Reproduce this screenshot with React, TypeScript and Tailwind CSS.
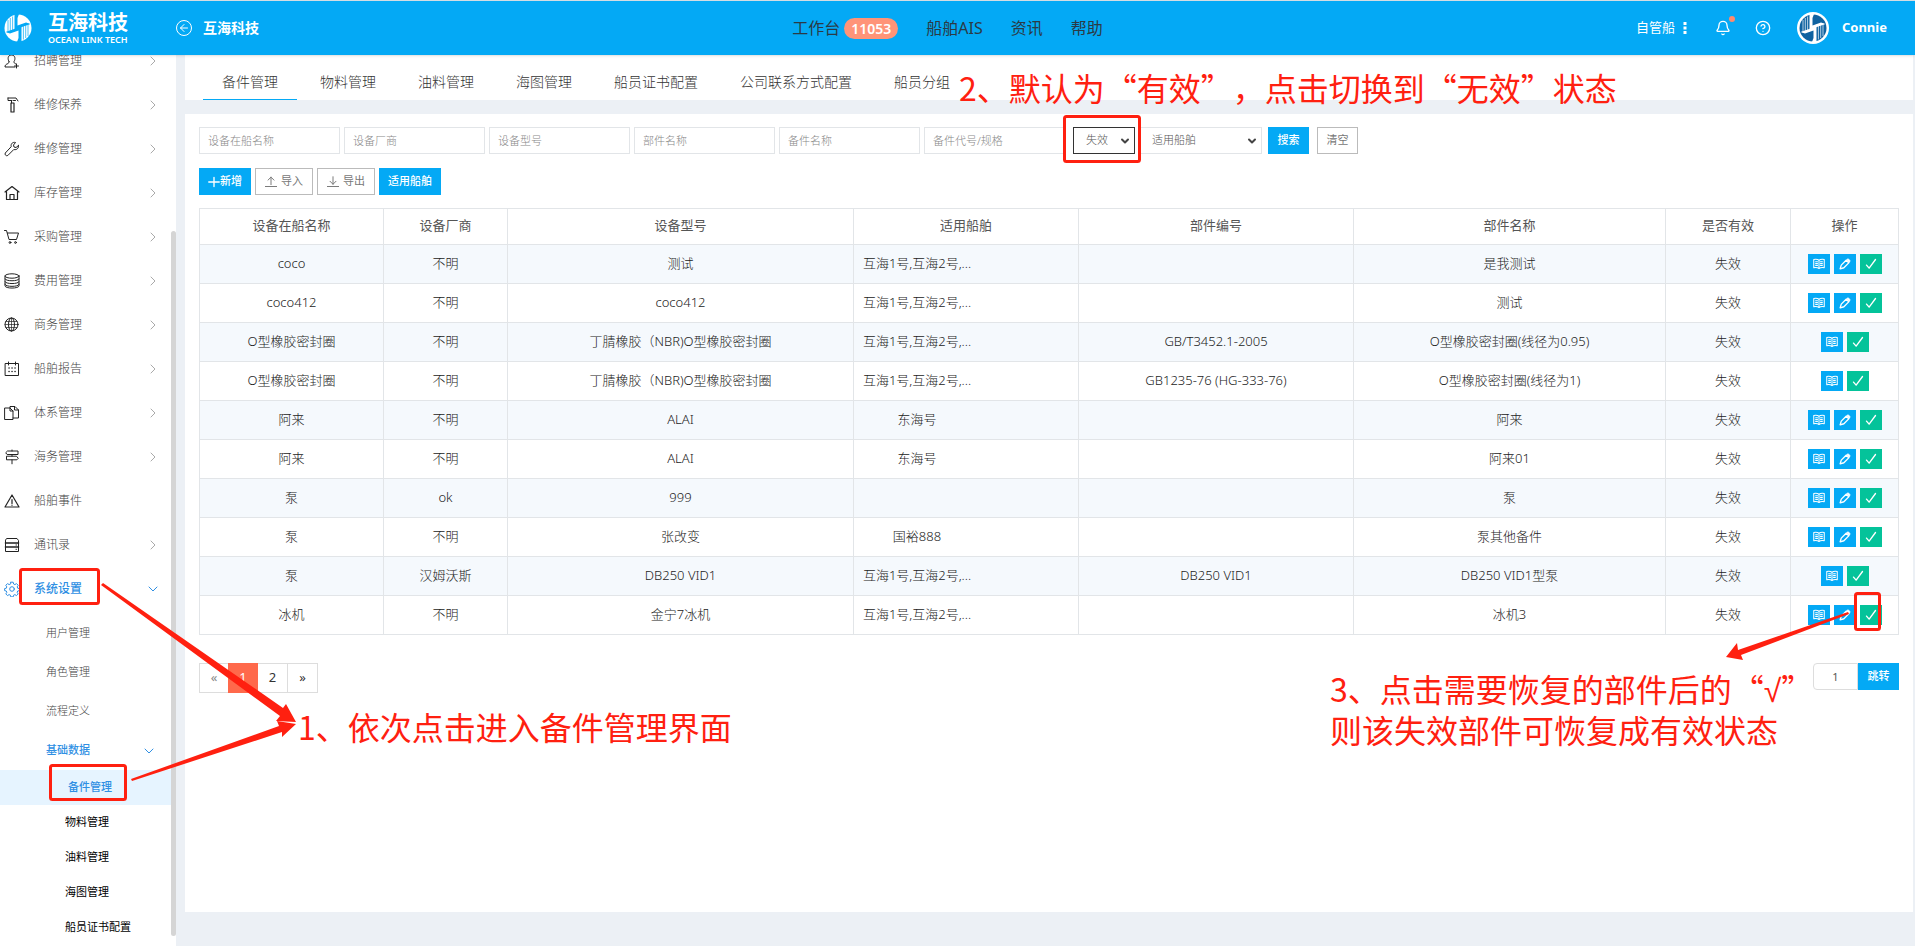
import React from "react";
import { ArrowLeft, Bell, ChevronDown, ChevronRight, CircleHelp } from "lucide-react";

type IconProps = { className?: string };

const Stroke = ({ className, children }: IconProps & { children: React.ReactNode }) => (
  <svg
    viewBox="0 0 16 16"
    className={className}
    fill="none"
    stroke="currentColor"
    strokeWidth="1"
    strokeLinecap="round"
    strokeLinejoin="round"
  >
    {children}
  </svg>
);

const RecruitIcon = ({ className }: IconProps) => (
  <Stroke className={className}>
    <path d="M5 8.500C3.500 6.500 3.500 2 7.500 2s4 4.500 2.500 6.500c0 1.500.5 2 2 2.500M5 8.500c0 1.500-.5 2-2 2.500-1.200.5-2 1.200-2 3h10M12.500 11v4M10.500 13h4" />
  </Stroke>
);

const HammerIcon = ({ className }: IconProps) => (
  <Stroke className={className}>
    <path d="M4 1h8l2 3M4 1v2.500h4M7.500 3.500V6M9.500 3.500h2" />
    <path d="M7 6h3v9H7z" strokeWidth="1.200" />
  </Stroke>
);

const WrenchIcon = ({ className }: IconProps) => (
  <Stroke className={className}>
    <path d="M14.500 4.500l-2.500 2-2-.5L9.500 4l2-2.500c-2.500-.7-5 1-4.300 4.200L1.300 12c-1 1.500 1 3.500 2.500 2.500l6-6c3 .8 5.200-1.500 4.700-4z" />
  </Stroke>
);

const HomeIcon = ({ className }: IconProps) => (
  <Stroke className={className}>
    <path d="M1 7L8 1.500 15 7M2.500 6.500v8h11v-8M6 14.500V9.500h4v5" strokeWidth="1.200" />
  </Stroke>
);

const CartIcon = ({ className }: IconProps) => (
  <Stroke className={className}>
    <path d="M.5 1.500h2l2.500 9h7.500L14.500 4H3.500" />
    <circle cx="6" cy="13.500" r=".9" />
    <circle cx="11.500" cy="13.500" r=".9" />
  </Stroke>
);

const CoinsIcon = ({ className }: IconProps) => (
  <Stroke className={className}>
    <ellipse cx="8" cy="3" rx="7" ry="2.200" />
    <path d="M1 3v2.500c0 3 14 3 14 0V3M1 5.800v2.500c0 3 14 3 14 0V5.800M1 8.600v2.500c0 3 14 3 14 0V8.600M1 11v1.800c0 3 14 3 14 0V11" />
  </Stroke>
);

const GlobeIcon = ({ className }: IconProps) => (
  <Stroke className={className}>
    <circle cx="7.500" cy="7.500" r="6.500" />
    <ellipse cx="7.500" cy="7.500" rx="3" ry="6.500" />
    <path d="M7.500 1v13M1 7.500h13M2 4.500h11M2 10.500h11" strokeWidth=".7" />
  </Stroke>
);

const CalendarIcon = ({ className }: IconProps) => (
  <Stroke className={className}>
    <path d="M1.500 2.500h13v12h-13zM4.500 1v3M11.500 1v3" />
    <path d="M5 7h.1M8 7h.1M11 7h.1M5 10.500h.1M8 10.500h.1M11 10.500h.1" strokeWidth="1.500" />
  </Stroke>
);

const FilesIcon = ({ className }: IconProps) => (
  <Stroke className={className}>
    <path d="M1 3h5l3 3v8.500H1zM6 3v3h3M6 2.500V1.500h5l3.500 3.500v8H9M10.500 1.500V5h4" />
  </Stroke>
);

const SignIcon = ({ className }: IconProps) => (
  <Stroke className={className}>
    <path d="M2 3.500l1.500-1.500H14v3.500H3.500zM14 9l-1.500-1.800H2.500v3.600h10zM8 5.500v1.700M8 10.800v4M8 1v1" />
  </Stroke>
);

const WarnIcon = ({ className }: IconProps) => (
  <Stroke className={className}>
    <path d="M8 2l7 12H1zM8 6.500v4M8 12v.3" strokeWidth="1.200" />
  </Stroke>
);

const ContactsIcon = ({ className }: IconProps) => (
  <Stroke className={className}>
    <path d="M3 1.500h10l1.500 2v11h-13v-11z" />
    <path d="M1.500 6h13M1.500 10h13" strokeWidth="1.600" />
    <path d="M12 8h.5M12 12.300h.5" />
  </Stroke>
);

const GearIcon = ({ className }: IconProps) => (
  <Stroke className={className}>
    <circle cx="8" cy="8" r="2.300" />
    <path d="M6.800 1.200h2.400l.4 1.800 1.300.6 1.600-1 1.700 1.700-1 1.600.5 1.300 1.800.4v2l-1.800.4-.5 1.400 1 1.500-1.700 1.700-1.600-1-1.300.6-.4 1.700H6.800l-.4-1.700-1.300-.6-1.600 1-1.700-1.700 1-1.500-.5-1.400L.6 9.600v-2l1.700-.4.5-1.300-1-1.600 1.700-1.700 1.600 1L6.400 3z" />
  </Stroke>
);

const LogoMark = ({ className, disc, band }: IconProps & { disc: string; band: string }) => (
  <svg viewBox="0 0 28 28" className={className}>
    <circle cx="14" cy="14" r="13.500" fill={disc} />
    {[0, 180].map((angle) => (
      <g key={angle} transform={`rotate(${angle} 14 14)`}>
        <path d="M10.500 0H15l-1.500 4v7.500L22 8.500l4.500 1.500-10 3.500c-3 1-5 2.500-6 4.500z" fill={band} />
        <path d="M4 6v13M6.300 4v15M8.600 2.500V17" stroke={band} strokeWidth=".7" />
      </g>
    ))}
  </svg>
);

const menus = [
  { title: "招聘管理", icon: RecruitIcon },
  { title: "维修保养", icon: HammerIcon },
  { title: "维修管理", icon: WrenchIcon },
  { title: "库存管理", icon: HomeIcon },
  { title: "采购管理", icon: CartIcon },
  { title: "费用管理", icon: CoinsIcon },
  { title: "商务管理", icon: GlobeIcon },
  { title: "船舶报告", icon: CalendarIcon },
  { title: "体系管理", icon: FilesIcon },
  { title: "海务管理", icon: SignIcon },
  { title: "船舶事件", icon: WarnIcon, leaf: true },
  { title: "通讯录", icon: ContactsIcon },
];

const tabs = ["备件管理", "物料管理", "油料管理", "海图管理", "船员证书配置", "公司联系方式配置", "船员分组"];

const filters = ["设备在船名称", "设备厂商", "设备型号", "部件名称", "备件名称", "备件代号/规格"];

const columns = [
  { title: "设备在船名称", width: "w-[184px]" },
  { title: "设备厂商", width: "w-[124px]" },
  { title: "设备型号", width: "w-[346px]" },
  { title: "适用船舶", width: "w-[225px]" },
  { title: "部件编号", width: "w-[275px]" },
  { title: "部件名称", width: "w-[312px]" },
  { title: "是否有效", width: "w-[125px]" },
  { title: "操作", width: "w-[108px]" },
];

const SHIPS = "互海1号,互海2号,...";

const rows = [
  { name: "coco", maker: "不明", model: "测试", ships: SHIPS, code: "", part: "是我测试", editable: true },
  { name: "coco412", maker: "不明", model: "coco412", ships: SHIPS, code: "", part: "测试", editable: true },
  { name: "O型橡胶密封圈", maker: "不明", model: "丁腈橡胶（NBR)O型橡胶密封圈", ships: SHIPS, code: "GB/T3452.1-2005", part: "O型橡胶密封圈(线径为0.95)", editable: false },
  { name: "O型橡胶密封圈", maker: "不明", model: "丁腈橡胶（NBR)O型橡胶密封圈", ships: SHIPS, code: "GB1235-76 (HG-333-76)", part: "O型橡胶密封圈(线径为1)", editable: false },
  { name: "阿来", maker: "不明", model: "ALAI", ships: "东海号", code: "", part: "阿来", editable: true },
  { name: "阿来", maker: "不明", model: "ALAI", ships: "东海号", code: "", part: "阿来01", editable: true },
  { name: "泵", maker: "ok", model: "999", ships: "", code: "", part: "泵", editable: true },
  { name: "泵", maker: "不明", model: "张改变", ships: "国裕888", code: "", part: "泵其他备件", editable: true },
  { name: "泵", maker: "汉姆沃斯", model: "DB250 VID1", ships: SHIPS, code: "DB250 VID1", part: "DB250 VID1型泵", editable: false },
  { name: "冰机", maker: "不明", model: "金宁7冰机", ships: SHIPS, code: "", part: "冰机3", editable: true },
];

const Header = () => (
  <header className="relative z-10 flex h-[55px] shrink-0 items-center border-t border-[#d5dde3] bg-[#04a9f5] text-white shadow-sm">
    <div className="flex w-44 items-center gap-4 pl-1">
      <LogoMark className="size-7" disc="#fff" band="#04a9f5" />
      <div className="flex flex-col">
        <span className="text-[20px] leading-6 font-bold">互海科技</span>
        <span className="text-[9px] leading-[10px] font-semibold whitespace-nowrap">OCEAN LINK TECH</span>
      </div>
    </div>
    <button type="button" aria-label="返回" className="flex size-4 items-center justify-center rounded-full border border-white">
      <ArrowLeft className="size-3" />
    </button>
    <span className="ml-[11px] text-sm font-bold">互海科技</span>
    <nav className="ml-auto flex items-center gap-7 text-base text-[#2b3a45]">
      <a href="#" className="flex items-center gap-1">
        工作台
        <span className="rounded-full bg-[#ff9478] px-[7px] text-sm leading-[21px] font-semibold text-white">11053</span>
      </a>
      <a href="#">船舶AIS</a>
      <a href="#">资讯</a>
      <a href="#">帮助</a>
    </nav>
    <div className="ml-auto flex items-center pr-7">
      <a href="#" className="flex items-center gap-2 text-[13px]">
        自管船
        <svg viewBox="0 0 4 12" className="h-3 w-1" fill="currentColor">
          <path d="M.5 0h3v3h-3zM.5 4.500h3v3h-3zM.5 9h3v3h-3z" />
        </svg>
      </a>
      <button type="button" aria-label="通知" className="relative ml-7">
        <Bell className="size-4" strokeWidth={2} />
        <span className="absolute -top-1 -right-1 size-[6px] rounded-full bg-[#ff8a6e]" />
      </button>
      <button type="button" aria-label="帮助" className="ml-6">
        <CircleHelp className="size-4" strokeWidth={2} />
      </button>
      <span className="ml-[26px] flex size-8 items-center justify-center rounded-full bg-white">
        <LogoMark className="size-7" disc="#0f62a0" band="#fff" />
      </span>
      <span className="ml-[13px] text-[13px] font-bold">Connie</span>
    </div>
  </header>
);

const Sidebar = () => (
  <aside className="flex w-44 shrink-0 overflow-hidden bg-white">
    <nav className="-mt-4 flex-1 text-xs text-[#444]">
      {menus.map(({ title, icon: Icon, leaf }) => (
        <a key={title} href="#" className="flex h-11 items-center pr-[10px] pl-1 font-light">
          <Icon className="size-4 text-[#222]" />
          <span className="ml-[14px] flex-1">{title}</span>
          {!leaf && <ChevronRight className="size-4 text-[#aaa]" strokeWidth={1.5} />}
        </a>
      ))}
      <a href="#" className="flex h-11 items-center pr-[10px] pl-1 text-[#2f8fe3]">
        <GearIcon className="size-4" />
        <span className="ml-[14px] flex-1 font-medium">系统设置</span>
        <ChevronDown className="size-4" strokeWidth={1.5} />
      </a>
      <div className="pt-[3px] text-[11px]">
        {["用户管理", "角色管理", "流程定义"].map((title) => (
          <a key={title} href="#" className="flex h-[39px] items-center pl-[46px] font-light">
            {title}
          </a>
        ))}
        <a href="#" className="flex h-[39px] items-center justify-between pr-[14px] pl-[46px] font-medium text-[#2f8fe3]">
          基础数据
          <ChevronDown className="size-4" strokeWidth={1.5} />
        </a>
        <a href="#" className="flex h-[35px] items-center bg-[#e6f4ff] pl-[68px] font-medium text-[#2f8fe3]">
          备件管理
        </a>
        {["物料管理", "油料管理", "海图管理", "船员证书配置"].map((title) => (
          <a key={title} href="#" className="flex h-[35px] items-center pl-[65px] text-black">
            {title}
          </a>
        ))}
      </div>
    </nav>
    <div className="mt-44 mb-[10px] w-[5px] rounded-full bg-[#d5d5d5]" />
  </aside>
);

const selectArrow = "pointer-events-none absolute top-2 right-1 size-3 text-[#444]";

const Filters = () => (
  <form className="flex items-center gap-1 text-[11px]" onSubmit={(e) => e.preventDefault()}>
    {filters.map((label) => (
      <input
        key={label}
        type="text"
        aria-label={label}
        placeholder={label}
        className="h-[27px] w-[141px] border border-[#e2e5e8] px-2 font-light placeholder:text-[#888]"
      />
    ))}
    <div className="flex items-center gap-1 pl-1">
      <div className="relative">
        <select aria-label="是否有效" className="h-[27px] w-[62px] appearance-none border border-[#333] pl-3 font-light text-[#555]">
          <option>失效</option>
        </select>
        <ChevronDown className={selectArrow} strokeWidth={4} />
      </div>
      <div className="relative">
        <select aria-label="适用船舶" className="h-[27px] w-[123px] appearance-none border border-[#e2e5e8] pl-3 font-light text-[#555]">
          <option>适用船舶</option>
        </select>
        <ChevronDown className={selectArrow} strokeWidth={4} />
      </div>
    </div>
    <div className="flex gap-2 pl-[2px]">
      <button type="submit" className="h-[27px] w-[41px] bg-[#04a9f5] font-medium text-white">搜索</button>
      <button type="button" className="h-[27px] w-[41px] border border-[#bbb] text-[#777]">清空</button>
    </div>
  </form>
);

const Toolbar = () => (
  <div className="mt-[14px] flex gap-1 text-[11px]">
    <button type="button" className="flex h-[27px] items-center bg-[#04a9f5] px-[9px] font-medium text-white">
      <Stroke className="size-3">
        <path d="M8 2v12M1 8h14" strokeWidth="1.800" />
      </Stroke>
      新增
    </button>
    <button type="button" className="flex h-[27px] items-center gap-1 border border-[#bbb] px-[9px] text-[#777]">
      <Stroke className="size-3">
        <path d="M8 11.500V1.500M4 5.500l4-4 4 4M.5 14h15" strokeWidth="1.300" />
      </Stroke>
      导入
    </button>
    <button type="button" className="flex h-[27px] items-center gap-1 border border-[#bbb] px-[9px] text-[#777]">
      <Stroke className="size-3">
        <path d="M8 1v10M4 7l4 4 4-4M.5 14h15" strokeWidth="1.300" />
      </Stroke>
      导出
    </button>
    <button type="button" className="h-[27px] bg-[#04a9f5] px-[9px] font-medium text-white">适用船舶</button>
  </div>
);

const cell = "border border-[#e2e5e8] p-0";
const textCell = `${cell} pb-[3px]`;

const PartsTable = () => (
  <table className="mt-[13px] w-full table-fixed border-collapse text-center text-[13px] leading-5 font-light text-[#222]">
    <thead>
      <tr className="h-9">
        {columns.map((column) => (
          <th key={column.title} className={`${textCell} ${column.width} font-normal text-[#555]`}>
            {column.title}
          </th>
        ))}
      </tr>
    </thead>
    <tbody>
      {rows.map((row, i) => (
        <tr key={i} className="h-[39px] odd:bg-[#f5f9fd]">
          <td className={textCell}>{row.name}</td>
          <td className={textCell}>{row.maker}</td>
          <td className={textCell}>{row.model}</td>
          <td className={`${textCell} text-left`}>
            <span className="ml-2 inline-block w-[110px] text-center whitespace-nowrap">{row.ships}</span>
          </td>
          <td className={textCell}>{row.code}</td>
          <td className={textCell}>{row.part}</td>
          <td className={textCell}>失效</td>
          <td className={cell}>
            <div className="flex justify-center gap-1 text-white">
              <button type="button" aria-label="查看" className="flex h-5 w-[22px] items-center justify-center bg-[#04a9f5]">
                <Stroke className="size-3">
                  <path d="M8 3C6 1.500 4 1.500 1 2v11c3-.5 5-.5 7 1 2-1.500 4-1.500 7-1V2C12 1.500 10 1.500 8 3zM8 3v11M3.500 5h2.500M3.500 7.500h2.500M3.500 10h2.500M10 5h2.500M10 7.500h2.500M10 10h2.500" strokeWidth="1.400" />
                </Stroke>
              </button>
              {row.editable && (
                <button type="button" aria-label="编辑" className="flex h-5 w-[22px] items-center justify-center bg-[#04a9f5]">
                  <Stroke className="size-3">
                    <path d="M1.500 14.500l1.500-5 6.500-6.500 3.500 3.500-6.500 6.500z" strokeWidth="1.800" />
                    <path d="M10 2.500l1-1c1.500-1 4.500 1.500 3.500 3.500l-1 1z" fill="currentColor" />
                  </Stroke>
                </button>
              )}
              <button type="button" aria-label="恢复" className="flex h-5 w-[22px] items-center justify-center bg-[#04c39a]">
                <Stroke className="size-3">
                  <path d="M2 9.500l3.500 4L14 2" strokeWidth="1.800" />
                </Stroke>
              </button>
            </div>
          </td>
        </tr>
      ))}
    </tbody>
  </table>
);

const Pager = () => (
  <div className="mt-7 flex items-start justify-between">
    <div className="flex h-[30px] border border-[#ddd] text-[13px] text-[#333]">
      <button type="button" className="w-[28px] text-[#888]">«</button>
      <button type="button" className="-my-px w-[30px] bg-[#ff694b] text-white">1</button>
      <button type="button" className="w-[30px] border-r border-[#ddd]">2</button>
      <button type="button" className="w-[29px]">»</button>
    </div>
    <div className="flex text-[11px]">
      <input
        type="text"
        aria-label="页码"
        defaultValue="1"
        className="h-[27px] w-[45px] rounded-l-sm border border-[#ddd] text-center text-[#555]"
      />
      <button type="button" className="h-[27px] w-[41px] bg-[#04a9f5] font-medium text-white">跳转</button>
    </div>
  </div>
);

// guide layer: steps, frames and arrows drawn over the page
const Guide = () => (
  <div className="pointer-events-none absolute inset-0 z-20 overflow-hidden font-['Noto_Sans_CJK_SC',sans-serif] text-[32px] leading-[41px] whitespace-nowrap text-[#ff2010] [text-spacing-trim:space-all]">
    <svg width="1915" height="946" viewBox="0 0 1915 946" className="absolute top-0 left-0 max-w-none" fill="none">
      <g stroke="#ff2010" strokeWidth="3">
        <rect x="1064.500" y="116.500" width="75" height="45" rx="2" />
        <rect x="20.500" y="569.500" width="78" height="34" rx="2" />
        <rect x="50.500" y="765.500" width="75" height="34" rx="2" />
        <rect x="1855.500" y="593.500" width="24" height="36" rx="2" />
      </g>
      <g fill="#ff2010">
        <path d="M103 583L283 708l3-4 10 18-20-1 4-5L101 585z" />
        <path d="M131 779L279 726l-2-5 19 3-14 13v-5L132 781z" />
        <path d="M1848 612L1738 650l-1-7-11 14 17 3-2-5L1849 614z" />
      </g>
    </svg>
    <p className="absolute top-[67px] left-[959px]">2、默认为“有效”，点击切换到“无效”状态</p>
    <p className="absolute top-[706px] left-[298px]">1、依次点击进入备件管理界面</p>
    <div className="absolute top-[668px] left-[1330px]">
      <p>
        3、点击需要恢复的部件后的“<span className="font-['Liberation_Sans'] leading-none">√</span>”
      </p>
      <p>则该失效部件可恢复成有效状态</p>
    </div>
  </div>
);

const App = () => (
  <div className="relative flex h-screen flex-col overflow-hidden bg-[#ecf0f5] font-['Noto_Sans','Noto_Sans_CJK_SC',sans-serif]">
    <Header />
    <div className="flex min-h-0 flex-1">
      <Sidebar />
      <main className="flex min-w-0 flex-1 flex-col pr-[2px] pl-[9px]">
        <div className="flex h-[45px] shrink-0 items-stretch gap-1 bg-white pl-[18px] text-sm font-light text-[#333]">
          {tabs.map((tab, i) => (
            <a
              key={tab}
              href="#"
              className={`flex items-center border-b px-[19px] pt-[10px] ${i === 0 ? "border-[#04a9f5]" : "border-transparent"}`}
            >
              {tab}
            </a>
          ))}
        </div>
        <section className="mt-[14px] mb-[34px] flex-1 bg-white px-[14px] pt-[13px]">
          <Filters />
          <Toolbar />
          <PartsTable />
          <Pager />
        </section>
      </main>
    </div>
    <Guide />
  </div>
);

export default App;
